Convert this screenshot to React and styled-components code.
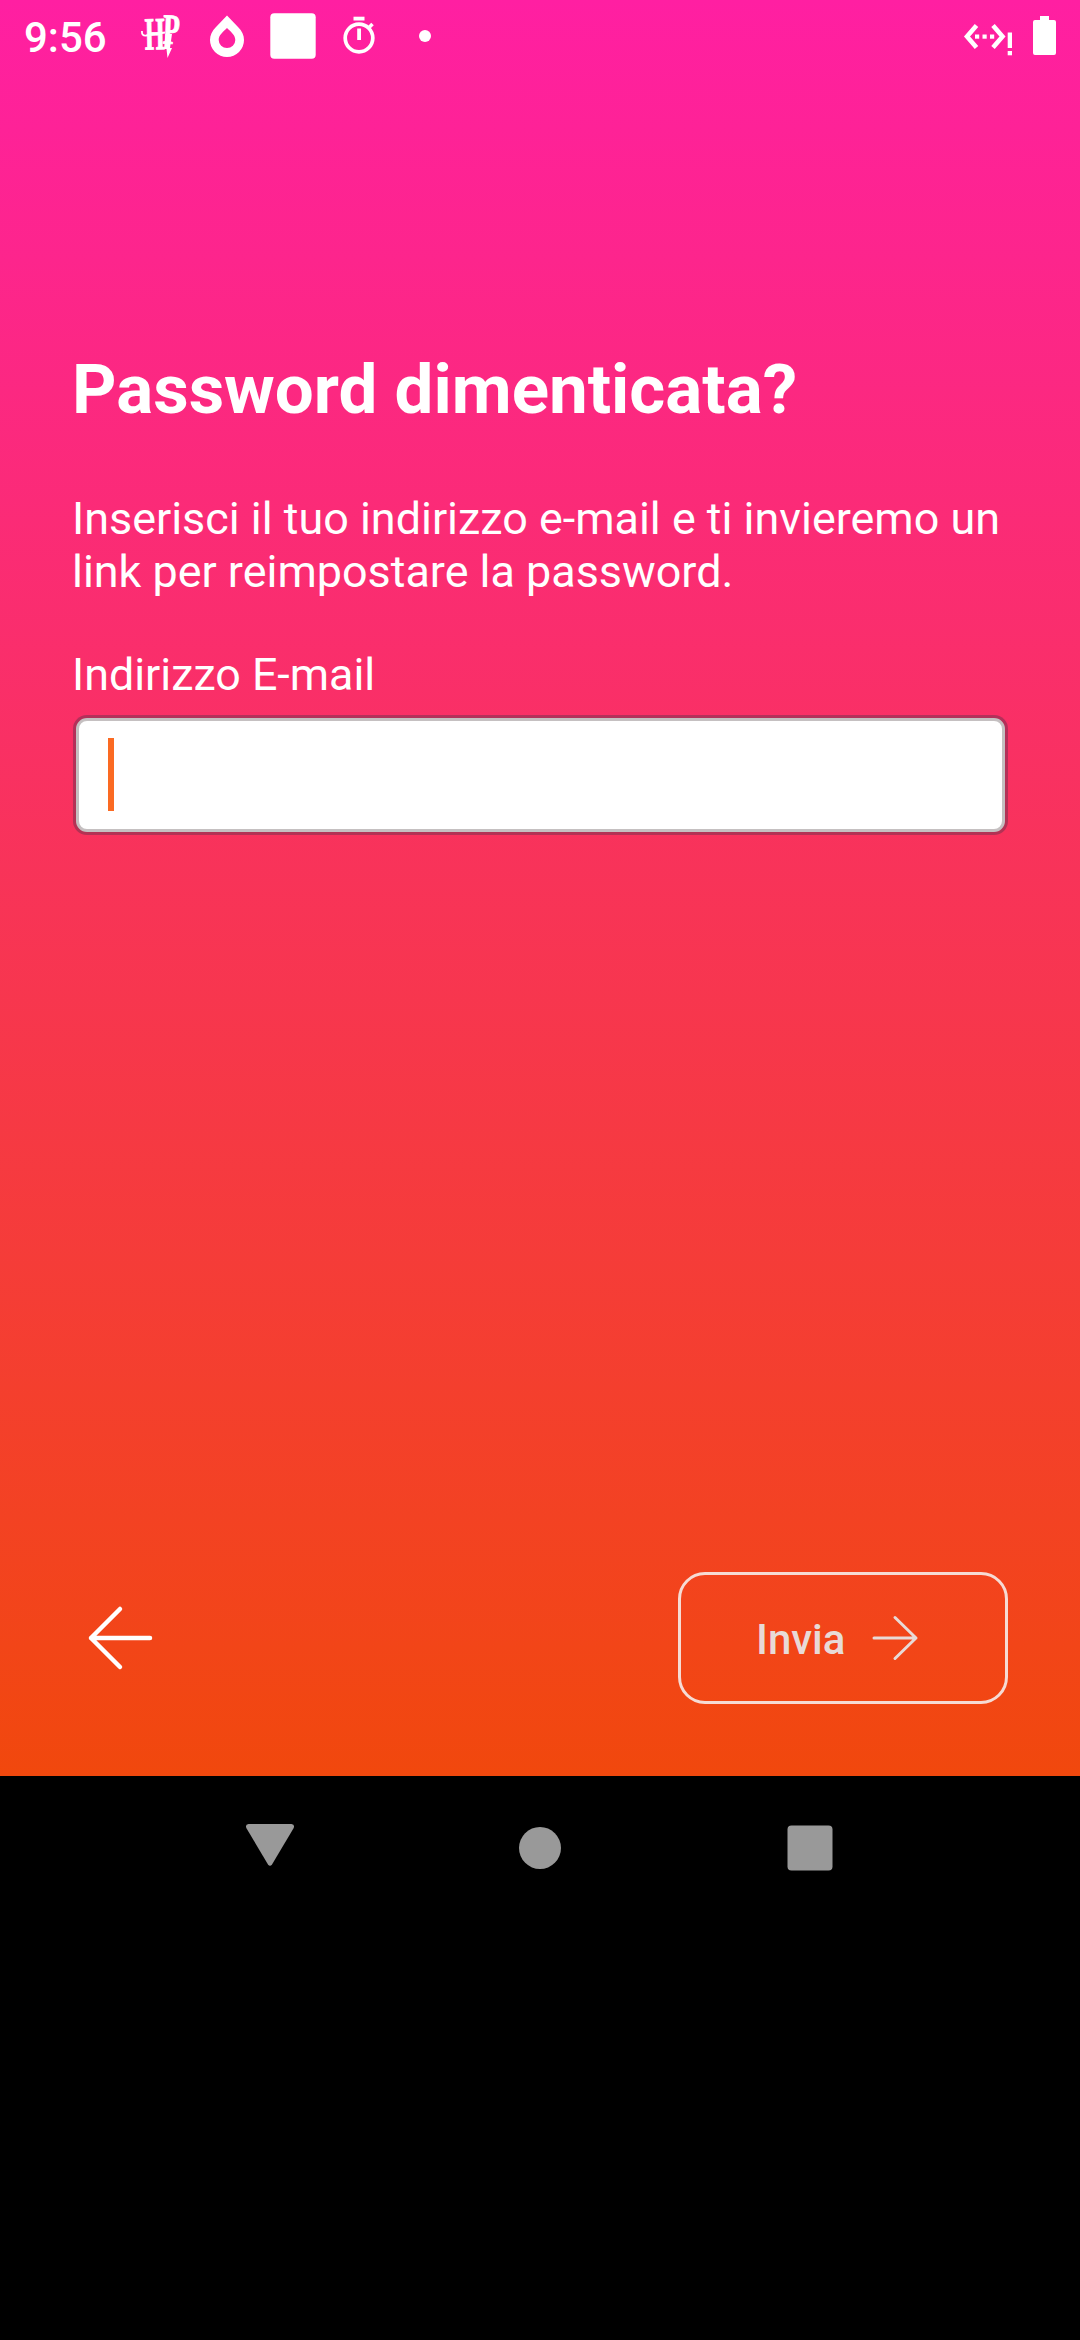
import React from "react";
import styled, { createGlobalStyle } from "styled-components";

const GlobalStyle = createGlobalStyle`
  *, *::before, *::after { box-sizing: border-box; }
  body { margin: 0; background: #000; }
`;

const Device = styled.div`
  width: 1080px;
  height: 2340px;
  display: flex;
  flex-direction: column;
  background: #000;
  color: #fff;
  font-family: Roboto, "Liberation Sans", sans-serif;
  overflow: hidden;
`;

const Screen = styled.div`
  height: 1776px;
  display: flex;
  flex-direction: column;
  background: linear-gradient(180deg, #ff1fa2 0%, #f1480d 100%);
`;

const StatusBar = styled.header`
  height: 72px;
  padding: 0 24px;
  display: flex;
  align-items: center;
  justify-content: space-between;
`;

const StatusGroup = styled.div`
  display: flex;
  align-items: center;
`;

const Clock = styled.span`
  width: 117px;
  padding-top: 3px;
  font-size: 42px;
  line-height: 50px;
  font-weight: 500;
`;

const Glyph = styled.svg`
  display: block;
  width: ${(p) => p.$w}px;
  height: 72px;
  margin-left: ${(p) => p.$gap || 0}px;
  fill: #fff;
`;

const Form = styled.main`
  flex: 1;
  display: flex;
  flex-direction: column;
  padding: 278px 72px 0 72px;
`;

const Title = styled.h1`
  margin: 0 0 62px;
  font-size: 69.1px;
  line-height: 80px;
  font-weight: 700;
  white-space: nowrap;
`;

const Message = styled.p`
  margin: 0 0 50px;
  font-size: 44.9px;
  line-height: 53px;
  white-space: nowrap;
`;

const Label = styled.label`
  font-size: 44.8px;
  line-height: 53px;
  margin-bottom: 17px;
`;

const Field = styled.div`
  height: 114px;
  margin: 0 3px 0 4px;
  padding: 0 32px;
  display: flex;
  align-items: center;
  background: #fff;
  border: 3px solid #c5c0c1;
  border-radius: 11px;
  box-shadow: 0 0 0 3px rgba(66, 50, 70, 0.38);
`;

const Caret = styled.span`
  width: 6px;
  height: 73px;
  margin-left: -3px;
  margin-top: -1px;
  background: #fb6a22;
`;

const Actions = styled.footer`
  height: 204px;
  padding: 0 72px 72px;
  display: flex;
  align-items: center;
  justify-content: space-between;
`;

const BackButton = styled.button`
  width: 96px;
  height: 96px;
  padding: 0;
  border: 0;
  background: none;
  display: flex;
  align-items: center;
  justify-content: center;
`;

const SendButton = styled.button`
  width: 330px;
  height: 132px;
  padding: 0 0 0 75px;
  display: flex;
  align-items: center;
  border: 3px solid #f6dbd4;
  border-radius: 27px;
  background: none;
  color: #e8dad7;
  font-family: inherit;
  font-size: 42px;
  font-weight: 500;
  line-height: 50px;
`;

const SendLabel = styled.span`
  width: 115px;
  padding-top: 3px;
  text-align: left;
`;

const ArrowIcon = styled.svg`
  display: block;
  flex: none;
  width: ${(p) => p.$size}px;
  height: ${(p) => p.$size}px;
  fill: none;
  stroke: currentColor;
  color: ${(p) => p.$color};
  stroke-linecap: round;
  stroke-linejoin: round;
`;

const NavBar = styled.nav`
  height: 144px;
  display: grid;
  grid-template-columns: repeat(3, 270px);
  justify-content: center;
  justify-items: center;
  align-items: center;
`;

const NavIcon = styled.svg`
  display: block;
  width: 60px;
  height: 60px;
  fill: #999;
`;

export default function App() {
  return (
    <Device>
      <GlobalStyle />
      <Screen>
        <StatusBar>
          <StatusGroup>
            <Clock>9:56</Clock>
            {/* wizard monogram */}
            <Glyph $w={42} viewBox="0 0 42 72">
              <g fontFamily="Liberation Serif, serif" fontWeight="700" stroke="#fff" strokeWidth="0.9">
                <text transform="translate(4 49.500) rotate(-1) scale(0.56 1)" fontSize="46" x="0" y="0">H</text>
                <text transform="translate(21.500 43.500) rotate(2) scale(0.64 1)" fontSize="43" x="0" y="0">P</text>
              </g>
              <path d="M24.500 34 L31 34 L29 48 L31 48 L26.500 58 L25.500 49 L23 49Z" />
              <path d="M1 31 Q0.500 36 5 35.500 L24 32.500" fill="none" stroke="#fff" strokeWidth="1.8" />
            </Glyph>
            {/* drop */}
            <Glyph $w={36} $gap={26} viewBox="0 0 36 72">
              <path
                fillRule="evenodd"
                d="M18 15.500 L29 27 C33 31 35 35 35 40 A17 17 0 0 1 1 40 C1 35 3 31 7 27Z M18 28 C14 32 9.700 35 9.700 40 A8.300 8 0 0 0 26.300 40 C26.300 35 22 32 18 28Z"
              />
            </Glyph>
            <Glyph $w={46} $gap={25} viewBox="0 0 46 72">
              <rect x="0.300" y="13.300" width="45.400" height="45.400" rx="4" />
            </Glyph>
            {/* stopwatch */}
            <Glyph $w={36} $gap={25} viewBox="0 0 36 72">
              <circle cx="18" cy="38" r="13.800" fill="none" stroke="#fff" strokeWidth="3.700" />
              <rect x="12.500" y="16.700" width="11" height="3.800" />
              <rect x="16.200" y="28.500" width="3.800" height="11.500" />
              <path d="M27 28.500 L31.500 24" stroke="#fff" strokeWidth="3.500" />
            </Glyph>
            <Glyph $w={12} $gap={42} viewBox="0 0 12 72">
              <circle cx="6" cy="36" r="6" />
            </Glyph>
          </StatusGroup>
          <StatusGroup>
            {/* wired network with alert */}
            <Glyph $w={50} viewBox="0 0 50 72">
              <path d="M13.500 25.500 L4 36.500 L13.500 47.500 M30 25.500 L39.500 36.500 L30 47.500" fill="none" stroke="#fff" strokeWidth="4.600" />
              <rect x="12" y="34.500" width="4.200" height="4.200" />
              <rect x="19.500" y="34.500" width="4.200" height="4.200" />
              <rect x="27" y="34.500" width="4.200" height="4.200" />
              <rect x="44.700" y="32.500" width="4.300" height="15.500" />
              <rect x="44.700" y="51" width="4.300" height="4.300" />
            </Glyph>
            <Glyph $w={24} $gap={19} viewBox="0 0 24 72">
              <path d="M8 16 H17 V20 H22 Q24 20 24 22 V53 Q24 55 22 55 H3 Q1 55 1 53 V22 Q1 20 3 20 H8Z" />
            </Glyph>
          </StatusGroup>
        </StatusBar>

        <Form>
          <Title>Password dimenticata?</Title>
          <Message>
            Inserisci il tuo indirizzo e-mail e ti invieremo un
            <br />
            link per reimpostare la password.
          </Message>
          <Label>Indirizzo E-mail</Label>
          <Field>
            <Caret />
          </Field>
        </Form>

        <Actions>
          <BackButton aria-label="Indietro">
            <ArrowIcon $size={72} $color="#fff" viewBox="0 0 72 72" strokeWidth="4.500">
              <path d="M66 36 H7 M36 7 L7 36 L36 65" />
            </ArrowIcon>
          </BackButton>
          <SendButton>
            <SendLabel>Invia</SendLabel>
            <ArrowIcon $size={48} $color="#e8dad7" viewBox="0 0 48 48" strokeWidth="3">
              <path d="M3 24 H45 M24 3.500 L45 24 L24 44.500" />
            </ArrowIcon>
          </SendButton>
        </Actions>
      </Screen>

      <NavBar>
        <NavIcon viewBox="0 0 60 60">
          <path d="M8.500 6 H51.500 Q55 6.500 53.700 10 L32 46.500 Q30 49 28 46.500 L6.300 10 Q5 6.500 8.500 6Z" />
        </NavIcon>
        <NavIcon viewBox="0 0 60 60">
          <circle cx="30" cy="30" r="21" />
        </NavIcon>
        <NavIcon viewBox="0 0 60 60">
          <rect x="7.500" y="7.500" width="45" height="45" rx="4" />
        </NavIcon>
      </NavBar>
    </Device>
  );
}
